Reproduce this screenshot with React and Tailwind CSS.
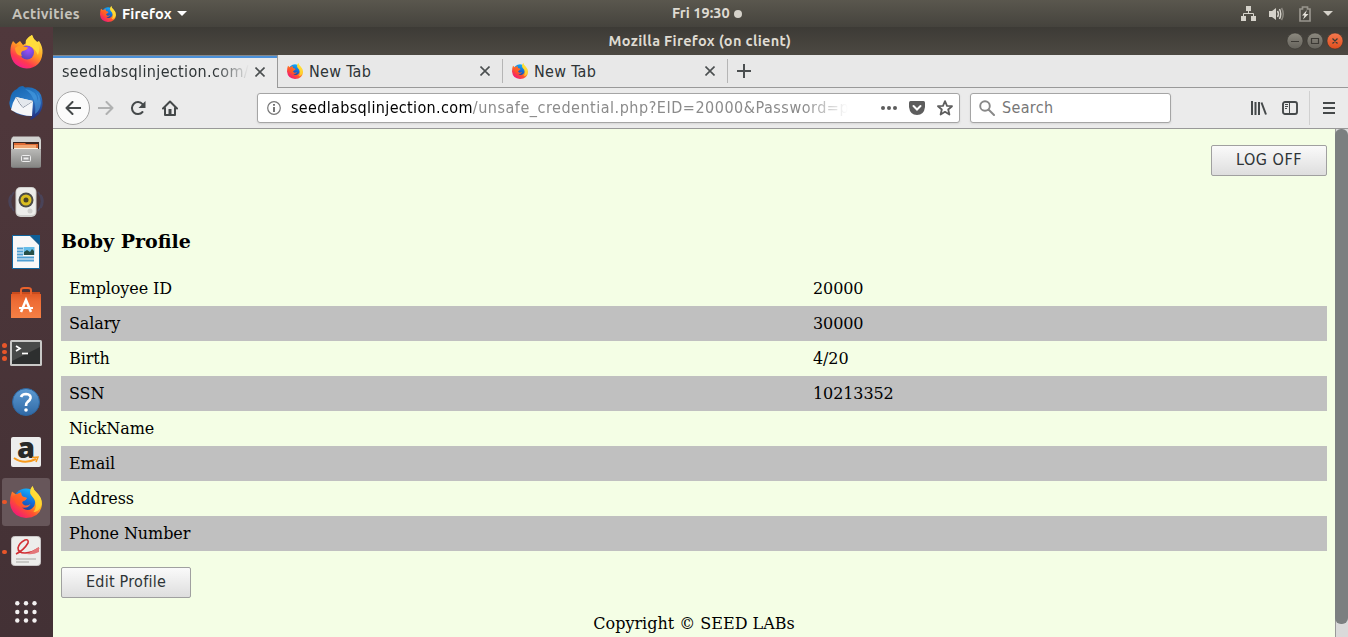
import React from 'react';

const UI = "font-['DejaVu_Sans_Condensed','DejaVu_Sans',sans-serif] [font-stretch:condensed]";
const SERIF = "font-['DejaVu_Serif',serif]";
const SHELL = "font-['Ubuntu','Noto_Sans',sans-serif]";

function Quantum({ size, id }) {
  return (
    <svg width={size} height={size} viewBox="0 0 32 32" className="shrink-0">
      <defs>
        <linearGradient id={id + 'a'} x1="0.85" y1="0.1" x2="0.2" y2="0.95">
          <stop offset="0" stopColor="#fff14a" />
          <stop offset="0.35" stopColor="#ffb21f" />
          <stop offset="0.65" stopColor="#ff5030" />
          <stop offset="1" stopColor="#f0167c" />
        </linearGradient>
        <linearGradient id={id + 'b'} x1="0.7" y1="0" x2="0.3" y2="1">
          <stop offset="0" stopColor="#12b8ff" />
          <stop offset="0.5" stopColor="#1569d6" />
          <stop offset="1" stopColor="#2b2a78" />
        </linearGradient>
      </defs>
      <circle cx="16" cy="15" r="12.5" fill={'url(#' + id + 'b)'} />
      <path d="M2 5.5L6 8.5L11 6.5Q11 9 12.5 10.5L17 12Q16 14.5 12.5 15.5Q11.5 17.5 14 19Q17 20.5 20.5 18Q17.5 23 12 21.5Q17 26 22 22.5Q26.5 19 24.5 13.5L20.5 8Q19.5 3.5 22.5 0Q23.5 4 27 7Q32 11.5 32 18Q31 31.5 16 32Q1.5 31 0 17Q0 10 2 5.5Z" fill={'url(#' + id + 'a)'} />
      <path d="M22.5 0Q23.5 4 27 7Q32 12 31.5 19Q29 26 23.5 26Q28 20 24.5 13.5L20.5 8Q19.5 3.5 22.5 0Z" fill="#ffde36" opacity=".75" />
      <path d="M3 10L6.5 8.5L11 6.5Q11 9 12.5 10.5L17 12Q16 14.5 12.5 15.5Q10 18 12 21.5Q5 20 3 10Z" fill="#ff5a25" opacity=".75" />
    </svg>
  );
}

function FirefoxNew() {
  return (
    <svg width="33" height="34" viewBox="0 0 33 34">
      <defs>
        <linearGradient id="fna" x1="0.8" y1="0.05" x2="0.25" y2="1">
          <stop offset="0" stopColor="#fff04a" />
          <stop offset="0.45" stopColor="#ff9b22" />
          <stop offset="0.75" stopColor="#ff3b4e" />
          <stop offset="1" stopColor="#f5179b" />
        </linearGradient>
        <radialGradient id="fnb" cx="0.6" cy="0.3" r="0.7">
          <stop offset="0" stopColor="#a150ff" />
          <stop offset="1" stopColor="#5a46bd" />
        </radialGradient>
      </defs>
      <path d="M3 6L6 9L10 6L13 10L18 7Q15 4 22 0Q23 4 27 7L29 6Q33 12 32.5 18Q31 33 16.5 33.5Q2 32 0.5 18Q0 11 3 6Z" fill="url(#fna)" />
      <circle cx="17" cy="17.5" r="7" fill="url(#fnb)" />
      <path d="M5 13Q9 9.5 13.5 11.5L18 12.5Q17 15 12.5 16Q10 18 12 21Q5 20 5 13Z" fill="#ff9f28" />
      <path d="M16 10Q14 4 22 0Q23 4 27 7Q31 12 28 20Q24 11 16 10Z" fill="#ffdc3c" />
    </svg>
  );
}

function Thunderbird() {
  return (
    <svg width="34" height="34" viewBox="0 0 34 34" className="mt-[2px]">
      <defs>
        <linearGradient id="tb" x1="0.2" y1="0" x2="0.7" y2="1">
          <stop offset="0" stopColor="#1665b0" />
          <stop offset="0.5" stopColor="#2c7cc9" />
          <stop offset="1" stopColor="#232c7c" />
        </linearGradient>
      </defs>
      <path d="M1 14Q2 5 8 3Q10 0 14 0L16 1.5Q27 0 32 9Q36 20 30 28Q26 32 21 34L23 30Q10 31 3 24Q-1 19 1 14Z" fill="url(#tb)" />
      <path d="M16 3Q27 4 29 15Q30 9 26 5Q31 9 32 17Q31 25 26 28Q28 11 16 3Z" fill="#4ba3e6" opacity=".55" />
      <path d="M7 11L24 15L23 30Q12 30 2 24Q3 17 7 11Z" fill="#f5f6f8" />
      <path d="M7 11Q11 19 14 21.5L24 15" fill="none" stroke="#8f97a6" strokeWidth="1" />
      <path d="M7 11L24 15L14 21Z" fill="#e4e8ed" />
    </svg>
  );
}

function Files() {
  return (
    <svg width="32" height="32" viewBox="0 0 32 32">
      <defs>
        <linearGradient id="fi" x1="0" y1="0" x2="0" y2="1">
          <stop offset="0" stopColor="#b9b9b7" /><stop offset="1" stopColor="#868684" />
        </linearGradient>
      </defs>
      <rect x="1" y="1" width="30" height="31" rx="2" fill="#777" />
      <path d="M3 0.5H29L31 4V13H1V4Z" fill="#d2d2d0" />
      <rect x="3" y="6" width="26" height="8" fill="#3d2620" />
      <path d="M4 7H15L16 8H28V13H4Z" fill="#df6b33" />
      <path d="M4 9H26V13H4Z" fill="#f0a672" />
      <path d="M4 12H28V13H4Z" fill="#fff0dc" />
      <rect x="1" y="13" width="30" height="18" rx="1" fill="url(#fi)" />
      <rect x="11.5" y="19.5" width="9" height="6" rx="1" fill="#999" stroke="#eee" />
      <rect x="13.5" y="21.5" width="5" height="2" fill="#eee" />
    </svg>
  );
}

function Speaker() {
  return (
    <svg width="36" height="32" viewBox="0 0 36 32">
      <path d="M6 6Q-1 15 6 25M3 9Q-1 15 3 22M30 6Q37 15 30 25M33 9Q37 15 33 22" fill="none" stroke="#46557f" strokeWidth="1.5" opacity=".45" />
      <rect x="7.5" y="1" width="21" height="30" rx="5" fill="#cfcfcd" />
      <rect x="8.5" y="2" width="19" height="27" rx="4" fill="#ececea" />
      <circle cx="18" cy="14" r="7.5" fill="#4b4b48" />
      <circle cx="18" cy="14" r="5.5" fill="#d9bd20" />
      <circle cx="18" cy="14" r="2.5" fill="#4a4426" />
      <circle cx="22" cy="25" r="2.5" fill="#d0d0ce" />
    </svg>
  );
}

function Writer() {
  return (
    <svg width="28" height="34" viewBox="0 0 28 34">
      <path d="M0.5 0.5H18L27.5 10V33.5H0.5Z" fill="#f8f8f8" stroke="#10659e" />
      <path d="M18 0H28V10Z" fill="#0d5f98" />
      <path d="M5 13.5H11M5 16.5H11M5 19.5H11M5 22.5H22M5 25.5H22" stroke="#4f9fd3" strokeWidth="2" />
      <rect x="11.5" y="12" width="11" height="8" fill="#66bde9" />
      <path d="M12 20V17L15 15L18 17L20 14L22 16V20Z" fill="#274f46" />
    </svg>
  );
}

function Software() {
  return (
    <svg width="32" height="33" viewBox="0 0 32 33">
      <defs>
        <linearGradient id="sw" x1="0" y1="0" x2="0" y2="1">
          <stop offset="0" stopColor="#e05a26" /><stop offset="0.3" stopColor="#ee6c35" /><stop offset="1" stopColor="#f58045" />
        </linearGradient>
      </defs>
      <path d="M2 6H30L31 32H1Z" fill="#c94b1d" />
      <path d="M1 8H31V32H1Z" fill="url(#sw)" />
      <path d="M11 9V4Q11 2 14 2H18Q21 2 21 4V9" fill="none" stroke="#e9622c" strokeWidth="2" />
      <path d="M11 26L16 14L21 26" fill="none" stroke="#fff" strokeWidth="2.5" />
      <path d="M9 22H23" stroke="#fff" strokeWidth="2" />
    </svg>
  );
}

function Terminal() {
  return (
    <svg width="32" height="28" viewBox="0 0 32 28" className="mt-[2px]">
      <rect x="0" y="1" width="32" height="26" rx="1.5" fill="#c9c9c7" />
      <rect x="2" y="3" width="28" height="22" fill="#2d2f2f" />
      <path d="M2 3H30V8L2 22Z" fill="#484a49" />
      <path d="M6 7L10 9.5L6 12" fill="none" stroke="#fff" strokeWidth="1.7" />
      <path d="M12 14.5H18" stroke="#fff" strokeWidth="1.7" />
    </svg>
  );
}

function Help() {
  return (
    <svg width="28" height="28" viewBox="0 0 28 28">
      <defs>
        <linearGradient id="hp" x1="0" y1="0" x2="0" y2="1">
          <stop offset="0" stopColor="#5d9bd3" /><stop offset="1" stopColor="#3069a5" />
        </linearGradient>
      </defs>
      <circle cx="14" cy="14" r="13.5" fill="url(#hp)" stroke="#2d659e" />
      <path d="M9 9Q10 6 14 6Q19 6.5 18.5 10Q18 12.5 15.5 14Q14 15 14 18" fill="none" stroke="#fff" strokeWidth="2.7" />
      <circle cx="14" cy="22" r="1.8" fill="#fff" />
    </svg>
  );
}

function Amazon() {
  return (
    <div className="grid h-[30px] w-[30px] justify-items-center rounded-[2px] bg-[#ededed]">
      <span className="col-start-1 row-start-1 -mt-[11px] font-['Open_Sans',sans-serif] text-[29px] leading-[42px] font-extrabold text-[#292929]">a</span>
      <svg width="28" height="9" viewBox="0 0 28 9" className="col-start-1 row-start-1 mt-[19px]">
        <path d="M2 2Q12 9 24 3" fill="none" stroke="#f79a1c" strokeWidth="2" />
        <path d="M20 1.5L26 1L24 6" fill="none" stroke="#f79a1c" strokeWidth="1.5" />
      </svg>
    </div>
  );
}

function Evince() {
  return (
    <svg width="30" height="30" viewBox="0 0 30 30" className="mb-[2px]">
      <rect x="0.5" y="0.5" width="29" height="29" rx="3" fill="#ededeb" stroke="#c9c6c7" />
      <path d="M5 18Q13 14 17 7Q18 3 14 4Q8 7 7 12Q7 17 14 17Q21 17 28 12" fill="none" stroke="#d12f34" strokeWidth="1.6" />
      <path d="M18 17L28 11V16Q22 19 16 18Z" fill="#e4777a" />
      <path d="M5 23H25M5 26H18" stroke="#bdbdbb" strokeWidth="1.3" />
    </svg>
  );
}

function Dock() {
  const apps = [
    { icon: <FirefoxNew /> },
    { icon: <Thunderbird /> },
    { icon: <Files /> },
    { icon: <Speaker /> },
    { icon: <Writer /> },
    { icon: <Software /> },
    { icon: <Terminal />, dots: 3 },
    { icon: <Help /> },
    { icon: <Amazon /> },
    { icon: <Quantum size={32} id="dk" />, dots: 1, active: true },
    { icon: <Evince />, dots: 1 },
  ];
  return (
    <nav className="flex w-[53px] shrink-0 flex-col bg-linear-to-b from-[#50383c] to-[#433135]">
      {apps.map((a, i) => (
        <div key={i} className="relative flex h-[50px] w-[52px] shrink-0 items-center justify-center">
          {a.active && <div className="absolute inset-x-[2px] top-[1px] h-[48px] rounded-[3px] bg-[#67565a]" />}
          <div className="relative">{a.icon}</div>
          {a.dots && (
            <div className="absolute left-[2px] flex flex-col gap-[2px]">
              {Array.from({ length: a.dots }, (_, k) => (
                <span key={k} className="h-[4.5px] w-[4.5px] rounded-full bg-[#e8562a]" />
              ))}
            </div>
          )}
        </div>
      ))}
      <svg width="22" height="22" viewBox="0 0 22 22" className="mt-[24px] ml-[15px]" fill="#f3f1f1">
        {[2.3, 11, 19.5].map((y) => [2.3, 11, 19.5].map((x) => <circle key={x + '-' + y} cx={x} cy={y} r="2.2" />))}
      </svg>
    </nav>
  );
}

function TopBar() {
  return (
    <header className={`${SHELL} flex h-[27px] shrink-0 items-center bg-linear-to-b from-[#5a574e] to-[#45433d] text-[14.5px] font-semibold text-[#dfdbd2]`}>
      <span className="ml-[12px] w-[88px] tracking-[0.35px] whitespace-nowrap text-[#c6c3bb]">Activities</span>
      <Quantum size={16} id="tp" />
      <span className="ml-[6px] w-[50px] font-bold tracking-[0.15px] text-white whitespace-nowrap">Firefox</span>
      <svg width="10" height="5" className="ml-[5px]"><path d="M0 0H10L5 5Z" fill="#fff" /></svg>
      <span className="ml-[485px] w-[58px] pb-[2px] whitespace-nowrap">Fri 19:30</span>
      <span className="ml-[4px] h-[8px] w-[8px] rounded-full bg-[#d5d2ca]" />
      <div className="mr-[15px] ml-auto flex items-center">
        <svg width="15" height="15" viewBox="0 0 15 15"><path d="M5 0H10V5H5ZM0 10H5V15H0ZM10 10H15V15H10Z" fill="#d5d2ca" /><path d="M7.5 5V7.5M2.5 10V7.5H12.5V10" fill="none" stroke="#d5d2ca" /></svg>
        <svg width="16" height="14" viewBox="0 0 16 14" className="ml-[13px]"><path d="M0 4H3L7 1V13L3 10H0Z" fill="#d5d2ca" /><path d="M8.5 4Q10.5 7 8.5 10M10.5 2Q13 7 10.5 12" fill="none" stroke="#d5d2ca" strokeWidth="1.5" /><path d="M12.5 1Q16 7 12.5 13" fill="none" stroke="#8a877f" strokeWidth="1.5" /></svg>
        <svg width="12" height="16" viewBox="0 0 12 16" className="ml-[14px]"><path d="M1 3H3.5V1H8.5V3H11V15H1Z" fill="none" stroke="#98958d" strokeWidth="1.7" /><path d="M8 4L3 9.5H5.5L4 13.5L9.5 8H6.5Z" fill="#e5e2da" /></svg>
        <svg width="10" height="5" className="ml-[12px]"><path d="M0 0H10L5 5Z" fill="#d5d2ca" /></svg>
      </div>
    </header>
  );
}

function TitleBar() {
  return (
    <div className={`${SHELL} relative flex h-[28px] shrink-0 items-center justify-center bg-linear-to-b from-[#3d3b36] to-[#4c4942] text-[14.5px] font-bold text-[#dfdbd2]`}>
      <span className="ml-[-1px] tracking-[0.33px] whitespace-nowrap">Mozilla Firefox (on client)</span>
      <svg width="58" height="18" viewBox="-1 0 58 18" className="absolute top-[5px] right-[4px]">
        <defs>
          <linearGradient id="wg" x1="0" y1="0" x2="0" y2="1"><stop offset="0" stopColor="#8c897f" /><stop offset="1" stopColor="#64625b" /></linearGradient>
          <linearGradient id="wo" x1="0" y1="0" x2="0" y2="1"><stop offset="0" stopColor="#f4794f" /><stop offset="1" stopColor="#de4e1d" /></linearGradient>
        </defs>
        <circle cx="8" cy="9" r="8" fill="url(#wg)" stroke="#33312d" strokeWidth=".5" />
        <circle cx="28" cy="9" r="8" fill="url(#wg)" stroke="#33312d" strokeWidth=".5" />
        <circle cx="48" cy="9" r="8" fill="url(#wo)" stroke="#33312d" strokeWidth=".5" />
        <path d="M4 9.5H12M24.5 6.5H31.5V11.5H24.5ZM45.5 6.5L50.5 11.5M50.5 6.5L45.5 11.5" fill="none" stroke="#3c3a35" strokeWidth="1.2" />
      </svg>
    </div>
  );
}

const Close = () => (
  <svg width="10" height="10" viewBox="0 0 10 10" className="shrink-0"><path d="M0.5 0.5L9.5 9.5M9.5 0.5L0.5 9.5" stroke="#4b4f50" strokeWidth="1.6" /></svg>
);

function Tabs() {
  return (
    <div className={`${UI} flex h-[33px] shrink-0 bg-[#e8e8e8] text-[16px] text-[#2e3436]`}>
      <div className="flex w-[225px] items-center border-t border-r border-t-[#85898c] border-r-[#999] bg-[#ebebeb] pr-[12px] pb-[1px] pl-[9px] shadow-[inset_0_2px_#4a90d9]">
        <span className="w-[187px] overflow-hidden mask-r-from-82% mask-r-to-100% tracking-[0.35px] whitespace-nowrap">seedlabsqlinjection.com/</span>
        <span className="ml-auto"><Close /></span>
      </div>
      {['n1', 'n2'].map((id) => (
        <div key={id} className="flex w-[225px] items-center border-b border-[#999] pr-[13px] pl-[9px]">
          <Quantum size={16} id={id} />
          <span className="ml-[6px] pt-[1px] tracking-[0.3px]">New Tab</span>
          <span className="ml-auto"><Close /></span>
          <span className="-mr-[13px] ml-[12px] h-[24px] w-px bg-[#b5b5b5]" />
        </div>
      ))}
      <div className="flex flex-1 items-center border-b border-[#999] pl-[9px]">
        <svg width="14" height="14"><path d="M7 0V14M0 7H14" stroke="#4b4f50" strokeWidth="2" /></svg>
      </div>
    </div>
  );
}

function Toolbar() {
  return (
    <div className={`${UI} flex h-[41px] shrink-0 items-center border-b border-[#999] bg-[#ebebeb] text-[16px]`}>
      <div className="ml-[3px] flex h-[34px] w-[34px] items-center justify-center rounded-full border border-[#a5a5a5] bg-[#fbfbfb]">
        <svg width="16" height="14" viewBox="0 0 16 14"><path d="M7.5 1L1.5 7L7.5 13M1.5 7H15.5" fill="none" stroke="#45494a" strokeWidth="2" strokeLinejoin="round" strokeLinecap="round" /></svg>
      </div>
      <svg width="16" height="14" viewBox="0 0 16 14" className="ml-[8px]"><path d="M8.5 1L14.5 7L8.5 13M14.5 7H0.5" fill="none" stroke="#b0b1b1" strokeWidth="2" strokeLinejoin="round" strokeLinecap="round" /></svg>
      <svg width="16" height="16" viewBox="0 0 16 16" className="ml-[16px]"><path d="M12.5 12A6 6 0 1 1 12.5 4.2" fill="none" stroke="#45494a" strokeWidth="2" strokeLinecap="round" /><path d="M15.5 1V8H8.5Z" fill="#45494a" /></svg>
      <svg width="16" height="16" viewBox="0 0 16 16" className="ml-[16px]"><path d="M1 8.5L8 1.5L15 8.5M3 8V15H13V8" fill="none" stroke="#45494a" strokeWidth="2" strokeLinejoin="round" strokeLinecap="round" /><path d="M6.5 9H9.5V15H6.5Z" fill="#45494a" /></svg>
      <div className="ml-[79px] flex h-[30px] w-[703px] items-center rounded-[3px] border border-[#a5a5a5] bg-white shadow-[0_1px_2px_#d5d5d5]">
        <svg width="14" height="14" viewBox="0 0 14 14" className="ml-[9px] shrink-0"><circle cx="7" cy="7" r="6.3" fill="none" stroke="#777" strokeWidth="1.2" /><path d="M7 6V11M7 3V4.8" stroke="#666" strokeWidth="1.8" /></svg>
        <div className="ml-[10px] w-[557px] overflow-hidden mask-r-from-92% mask-r-to-100% tracking-[0.52px] whitespace-nowrap text-[#8b8b8b]"><span className="tracking-[0.35px] text-black">seedlabsqlinjection.com</span>/unsafe_credential.php?EID=20000&amp;Password=p</div>
        <svg width="16" height="4" viewBox="0 0 16 4" className="ml-[33px] shrink-0" fill="#5d5d5d"><circle cx="2" cy="2" r="2" /><circle cx="8" cy="2" r="2" /><circle cx="14" cy="2" r="2" /></svg>
        <svg width="16" height="14" viewBox="0 0 16 14" className="ml-[12px] shrink-0"><path d="M1.5 0H14.5Q16 0 16 1.5V6Q15 14 8 14Q1 14 0 6V1.5Q0 0 1.5 0Z" fill="#5d5d5d" /><path d="M4.5 5L8 8.5L11.5 5" fill="none" stroke="#fff" strokeWidth="2" strokeLinecap="round" /></svg>
        <svg width="16" height="16" viewBox="0 0 16 16" className="ml-[12px] shrink-0"><path d="M8 1.2L10 5.8L15 6.2L11.2 9.5L12.4 14.5L8 11.8L3.6 14.5L4.8 9.5L1 6.2L6 5.8Z" fill="none" stroke="#5d5d5d" strokeWidth="1.8" strokeLinejoin="round" /></svg>
      </div>
      <div className="ml-[10px] flex h-[30px] w-[201px] items-center rounded-[3px] border border-[#a5a5a5] bg-white shadow-[0_1px_2px_#d5d5d5]">
        <svg width="16" height="16" viewBox="0 0 16 16" className="ml-[8px]"><circle cx="6" cy="6" r="4.8" fill="none" stroke="#888" strokeWidth="1.9" /><path d="M9.5 9.5L15 15" stroke="#888" strokeWidth="2" strokeLinecap="round" /></svg>
        <span className="ml-[7px] tracking-[0.35px] text-[#777]">Search</span>
      </div>
      <svg width="16" height="14" viewBox="0 0 16 14" className="ml-[80px]"><path d="M1 0V14M4.5 1V14M8 1V14" stroke="#45494a" strokeWidth="2" /><path d="M10.5 1.5L15 13.5" stroke="#45494a" strokeWidth="2" /></svg>
      <svg width="16" height="14" viewBox="0 0 16 14" className="ml-[15px]"><rect x="1" y="1" width="14" height="12" rx="2" fill="none" stroke="#45494a" strokeWidth="1.9" /><path d="M7.5 1V13M3 3.5H6M3 5.5H6M3 7.5H5" stroke="#45494a" /></svg>
      <span className="ml-[11px] h-[34px] w-px bg-[#d0d0d0]" />
      <svg width="12" height="12" viewBox="0 0 12 12" className="ml-[13px]"><path d="M0 1H12M0 6H12M0 11H12" stroke="#45494a" strokeWidth="2" /></svg>
    </div>
  );
}

function Button({ children, width }) {
  return (
    <button className={`${UI} ${width} h-[31px] rounded-[2px] border border-[#a0a0a0] bg-linear-to-b from-[#fafafa] to-[#dedede] pb-[2px] text-[16px] leading-[28px] text-[#2e3436]`}>{children}</button>
  );
}

const ROWS = [
  ['Employee ID', '20000'],
  ['Salary', '30000'],
  ['Birth', '4/20'],
  ['SSN', '10213352'],
  ['NickName', ''],
  ['Email', ''],
  ['Address', ''],
  ['Phone Number', ''],
];

function Page() {
  return (
    <main className={`${SERIF} flex min-h-0 flex-1 flex-col bg-[#f4fee5] pt-[16px] pr-[8px] pl-[8px] text-[16px] text-black`}>
      <div className="flex justify-end"><Button width="w-[116px] tracking-[0.5px]">LOG OFF</Button></div>
      <h3 className="mt-[53px] text-[19px] leading-[24px] font-bold">Boby Profile</h3>
      <div className="mt-[18px] tracking-[-0.1px]">
        {ROWS.map(([k, v]) => (
          <div key={k} className="flex h-[35px] items-center pl-[8px] leading-[19px] even:bg-[#c0c0c0]">
            <span className="w-[744px]">{k}</span>
            <span>{v}</span>
          </div>
        ))}
      </div>
      <div className="mt-[16px] flex"><Button width="w-[130px] tracking-[0.25px]">Edit Profile</Button></div>
      <p className="mt-[16px] text-center leading-[19px]">Copyright © SEED LABs</p>
    </main>
  );
}

export default function App() {
  return (
    <div className="flex h-[637px] w-[1348px] flex-col overflow-hidden">
      <TopBar />
      <div className="flex min-h-0 flex-1">
        <Dock />
        <div className="flex min-w-0 flex-1 flex-col">
          <TitleBar />
          <Tabs />
          <Toolbar />
          <div className="flex min-h-0 flex-1">
            <Page />
            <div className="w-[13px] bg-linear-to-r from-[#999] from-[1px] to-[#dadada] to-[1px] pb-[13px]"><div className="h-full rounded-[6px] bg-[#7b7f80]" /></div>
          </div>
        </div>
      </div>
    </div>
  );
}
